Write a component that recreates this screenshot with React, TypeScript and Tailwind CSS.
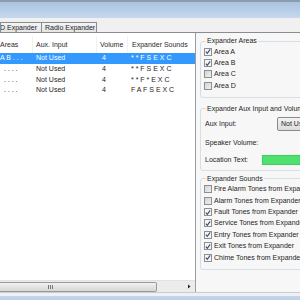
import React from "react";

const font = { fontFamily: '"Liberation Sans", Arial, sans-serif' };

function Check({ checked }: { checked: boolean }) {
  return (
    <div
      className={
        "w-[8px] h-[8px] border border-[#8e8f8f] flex items-center justify-center shrink-0 " +
        (checked ? "bg-[#f4f4f4]" : "bg-gradient-to-br from-[#d4d4d4] to-[#f0f0f0]")
      }
    >
      {checked && (
        <svg width="7" height="7" viewBox="0 0 7 7">
          <path d="M1 3.6 L2.7 5.6 L6 1" stroke="#2f4a7c" strokeWidth="1.2" fill="none" />
        </svg>
      )}
    </div>
  );
}

function CheckRow({ label, checked }: { label: string; checked: boolean }) {
  return (
    <div className="h-[11.4px] flex items-center gap-[2px] whitespace-nowrap">
      <Check checked={checked} />
      <span className="text-[#1e1e1e]">{label}</span>
    </div>
  );
}

const rows = [
  { a: "A B . . .", aux: "Not Used", vol: "4", snd: "* * F S E X C", sel: true },
  { a: "  . . . .", aux: "Not Used", vol: "4", snd: "* * F S E X C", sel: false },
  { a: "  . . . .", aux: "Not Used", vol: "4", snd: "* * F * E X C", sel: false },
  { a: "  . . . .", aux: "Not Used", vol: "4", snd: "F A F S E X C", sel: false },
];

export default function App() {
  return (
    <div
      className="w-[300px] h-[300px] overflow-hidden bg-[#f0f0f0] flex flex-col text-[7px] leading-[8px] text-[#1e1e1e]"
      style={font}
    >
      {/* top band */}
      <div className="h-[18px] shrink-0 border-t-2 border-[#8c9cb0] bg-gradient-to-b from-[#aac3df] to-[#c6d8ed]" />

      {/* tab strip */}
      <div className="h-[15px] shrink-0 flex items-end border-b border-[#898c95]">
        <div className="h-[10px] w-[42px] border border-b-0 border-[#898c95] bg-gradient-to-b from-[#f4f4f4] to-[#e4e4e4] flex items-center overflow-hidden whitespace-nowrap">
          <span className="ml-[-1px]">D Expander</span>
        </div>
        <div className="h-[10px] w-[55px] border border-b-0 border-l-0 border-[#898c95] bg-gradient-to-b from-[#f4f4f4] to-[#e4e4e4] flex items-center pl-[3px] whitespace-nowrap">
          Radio Expander
        </div>
      </div>

      {/* content */}
      <div className="h-[259px] shrink-0 flex bg-[#f7f7f7]">
        {/* list */}
        <div className="w-[196px] shrink-0 flex flex-col pt-[3px] bg-white border-r border-[#9a9da4]">
          <div className="h-[17px] flex items-center text-[#2b2b2b]">
            <div className="w-[33px] h-full flex items-center border-r border-[#f0f1f3] overflow-hidden whitespace-nowrap">
              Areas
            </div>
            <div className="w-[64px] h-full flex items-center pl-[3px] border-r border-[#f0f1f3]">Aux. Input</div>
            <div className="w-[31px] h-full flex items-center pl-[3px] border-r border-[#f0f1f3]">Volume</div>
            <div className="flex-1 h-full flex items-center pl-[4px] whitespace-nowrap overflow-hidden">Expander Sounds</div>
          </div>
          {rows.map((r, i) => (
            <div
              key={i}
              className={
                "h-[10.7px] flex items-center whitespace-pre " +
                (r.sel ? "bg-[#3399ff] text-white" : "text-[#1e1e1e]")
              }
            >
              <div className="w-[33px] overflow-hidden">{r.a}</div>
              <div className="w-[64px] pl-[3px]">{r.aux}</div>
              <div className="w-[31px] pl-[5px]">{r.vol}</div>
              <div className="flex-1 pl-[3px]">{r.snd}</div>
            </div>
          ))}
          <div className="flex-1" />
          {/* horizontal scrollbar */}
          <div className="h-[12px] flex items-center bg-[#ececec] border-t border-[#e2e2e2]">
            <div className="w-[157px] h-[10px] rounded-r-[2px] border border-l-0 border-[#9a9a9a] bg-gradient-to-b from-[#f2f2f2] to-[#d6d6d6] flex items-center">
              <div className="ml-[48px] flex gap-[1px]">
                <div className="w-[1px] h-[4px] bg-[#777]" />
                <div className="w-[1px] h-[4px] bg-[#777]" />
                <div className="w-[1px] h-[4px] bg-[#777]" />
              </div>
            </div>
            <div className="flex-1" />
            <div className="w-[12px] h-full flex items-center justify-center">
              <svg width="4" height="5" viewBox="0 0 4 5">
                <path d="M1 0.5 L3.5 2.5 L1 4.5 Z" fill="#222" />
              </svg>
            </div>
          </div>
        </div>

        {/* right panel */}
        <div className="flex-1 pl-[4px] flex flex-col">
          <fieldset className="mt-[4px] w-[130px] border border-[#d5dfe5] rounded-[3px] pl-[3px] pt-[1px] pb-[5px]">
            <legend className="px-[1px] ml-[2px] leading-[8px]">Expander Areas</legend>
            <CheckRow label="Area A" checked />
            <CheckRow label="Area B" checked />
            <CheckRow label="Area C" checked={false} />
            <CheckRow label="Area D" checked={false} />
          </fieldset>

          <fieldset className="mt-[7px] w-[130px] border border-[#d5dfe5] rounded-[3px] pl-[4px] pt-[4px] pb-[4px]">
            <legend className="px-[1px] ml-[1px] leading-[8px] whitespace-nowrap">Expander Aux Input and Volume</legend>
            <div className="h-[14px] flex items-center">
              <span className="w-[72px] shrink-0">Aux Input:</span>
              <div className="h-[14px] w-[50px] rounded-[2px] border border-[#8a8a8a] bg-gradient-to-b from-[#f3f3f3] to-[#dcdcdc] flex items-center pl-[3px] whitespace-nowrap overflow-hidden">
                Not Used
              </div>
            </div>
            <div className="h-[14px] mt-[5px] flex items-center">Speaker Volume:</div>
            <div className="h-[12px] mt-[4px] flex items-center">
              <span className="w-[57px] shrink-0">Location Text:</span>
              <div className="h-[10px] w-[60px] bg-[#4fe070] border border-[#3ccf5e]" />
            </div>
          </fieldset>

          <fieldset className="mt-[4px] w-[130px] border border-[#d5dfe5] rounded-[3px] pl-[3px] pt-[1px] pb-[6px]">
            <legend className="px-[1px] ml-[2px] leading-[8px]">Expander Sounds</legend>
            <CheckRow label="Fire Alarm Tones from Expander" checked={false} />
            <CheckRow label="Alarm Tones from Expander" checked={false} />
            <CheckRow label="Fault Tones from Expander" checked />
            <CheckRow label="Service Tones from Expander" checked />
            <CheckRow label="Entry Tones from Expander" checked />
            <CheckRow label="Exit Tones from Expander" checked />
            <CheckRow label="Chime Tones from Expander" checked />
          </fieldset>
        </div>
      </div>

      {/* bottom */}
      <div className="h-[4px] shrink-0 border-t border-[#c9ccd2] bg-[#f0f0f0]" />
      <div className="flex-1 bg-gradient-to-b from-[#c5d6ec] to-[#bcd0ea]" />
    </div>
  );
}
